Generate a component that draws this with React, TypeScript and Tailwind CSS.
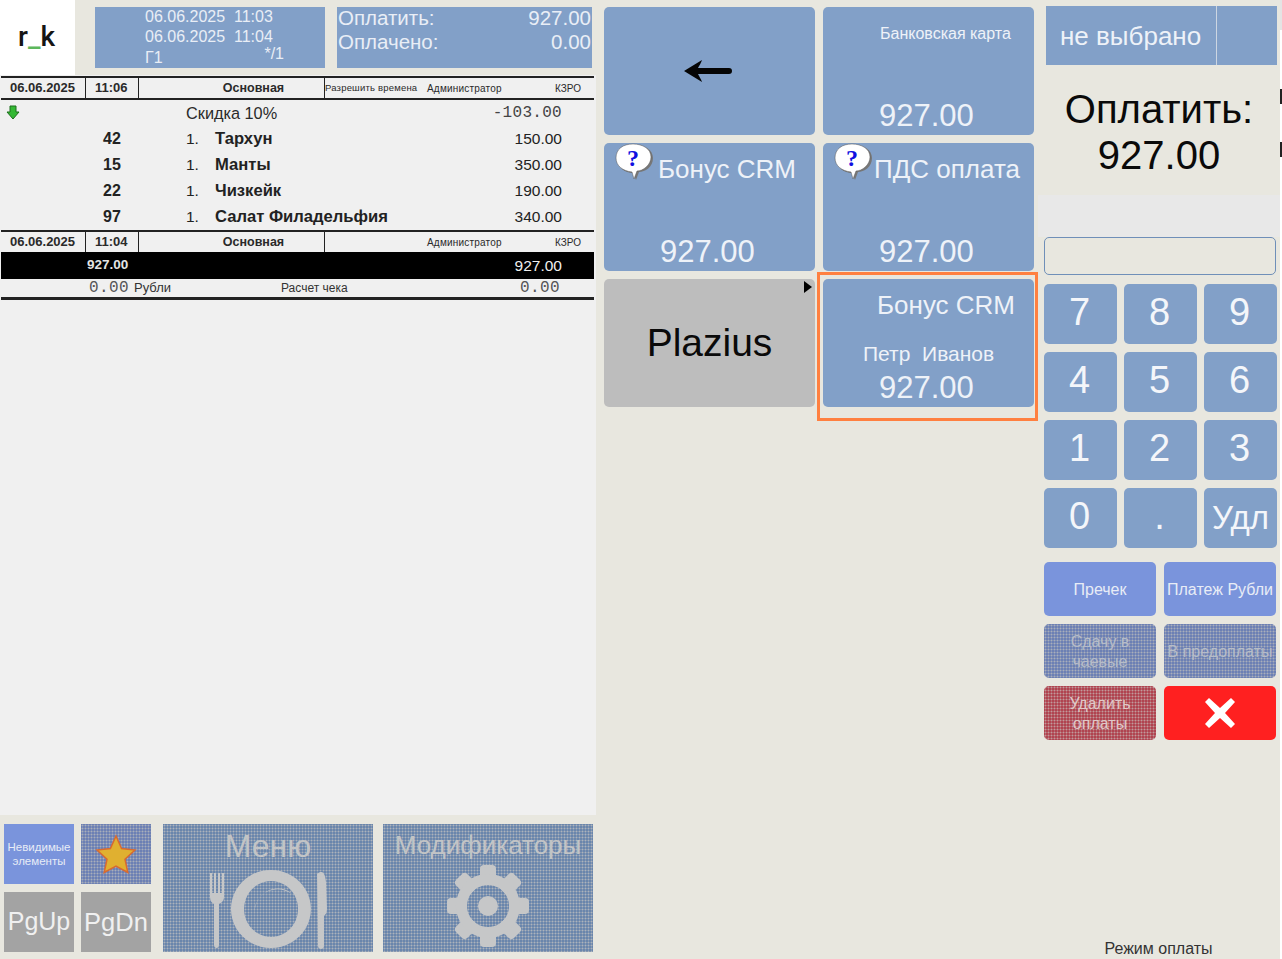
import React from "react";

const FONT = "font-['Liberation_Sans',Arial,sans-serif]";
const MONO = "font-['Liberation_Mono',monospace]";
const DITHER_BLUE = "bg-[#6a86ac] bg-[radial-gradient(circle,#adb3bb_0.85px,transparent_1.1px)] bg-[length:3px_3px]";
const DITHER_VIOLET = "bg-[#6c80b4] bg-[radial-gradient(circle,#a9aeba_0.85px,transparent_1.1px)] bg-[length:3px_3px]";
const DITHER_RED = "bg-[#b04450] bg-[radial-gradient(circle,#c09a9c_0.85px,transparent_1.1px)] bg-[length:3px_3px]";

function Bubble() {
  return (
    <svg width="40" height="38" viewBox="0 0 40 38" className="absolute left-[11px] top-[0px]">
      <path d="M3 16 C3 7 10 2 20 2 C30 2 38 7 38 15 C38 24 30 29 24 29 L21 37 L18 30 C10 30 3 25 3 16Z" fill="#777" />
      <path d="M1 15 C1 6 8 1 18 1 C28 1 36 6 36 14 C36 22 28 28 22 28 L19 36 L17 29 C8 28 1 23 1 15Z" fill="#fff" stroke="#555" strokeWidth="0.5" />
      <text x="18" y="23" textAnchor="middle" fontFamily="'Liberation Serif',serif" fontWeight="700" fontSize="24" fill="#1010e0">?</text>
    </svg>
  );
}

function PayButton({ title, titleClass, sub, amount = "927.00", amountPl, bubble }: { title?: string; titleClass?: string; sub?: string; amount?: string; amountPl: string; bubble?: boolean }) {
  return (
    <div className="relative flex h-[128px] w-[211px] flex-col rounded-[5px] bg-[#82a0c8] text-[#eef2f8]">
      {bubble && <Bubble />}
      <div className={`whitespace-nowrap ${titleClass}`}>{title}</div>
      <div className="flex-1" />
      {sub && <div className="mb-[4px] whitespace-pre pl-[40px] text-[21px] leading-[24px]">{sub}</div>}
      <div className={`mb-[1px] text-[31px] leading-[36px] ${amountPl}`}>{amount}</div>
    </div>
  );
}

function OrderHeader({ time, allow }: { time: string; allow?: boolean }) {
  return (
    <div className="flex h-[20px] items-center text-[#2a2a2a]">
      <div className="flex h-full w-[85px] items-center border-r border-[#222] pl-[9px] text-[13px] font-bold">06.06.2025</div>
      <div className="flex h-full w-[53px] items-center border-r border-[#222] pl-[9px] text-[13px] font-bold">{time}</div>
      <div className="flex h-full w-[186px] items-center justify-center border-r border-[#222] pl-[44px] text-[12.5px] font-bold">Основная</div>
      <div className="w-[102px] whitespace-nowrap text-[9.5px] tracking-[0.2px]">{allow ? "Разрешить времена" : ""}</div>
      <div className="w-[128px] text-[10px] tracking-[0.2px]">Администратор</div>
      <div className="text-[10px]">КЗРО</div>
    </div>
  );
}

function Item({ code, name, price }: { code: string; name: string; price: string }) {
  return (
    <div className="flex h-[26px] items-center text-[15.5px] text-[#222]">
      <div className="w-[185px] pl-[102px] text-[16px] font-bold">{code}</div>
      <div className="w-[29px]">1.</div>
      <div className="w-[290px] text-[16.6px] font-bold">{name}</div>
      <div className="w-[57px] text-right">{price}</div>
    </div>
  );
}

function Key({ children, small }: { children: React.ReactNode; small?: boolean }) {
  return (
    <div className={`flex h-[60px] w-[73px] items-center justify-center rounded-[5px] bg-[#82a0c8] leading-none text-[#f4f6fa] ${small ? "pb-[2px] text-[33px]" : "pb-[4px] pr-[2px] text-[38px]"}`}>
      {children}
    </div>
  );
}

function Action({ children, className }: { children: React.ReactNode; className: string }) {
  return <div className={`flex h-[54px] w-[112px] items-center justify-center whitespace-pre-line rounded-[5px] pt-[2px] text-center text-[16px] leading-[20px] ${className}`}>{children}</div>;
}

function Plate() {
  return (
    <svg width="120" height="84" viewBox="0 0 120 84">
      <g fill="#c6c7c8">
        <path d="M2 5h2v20h2V5h2v20h2V5h2v20h2V5h2v24c0 4-3 6-5 7v41c0 4-5 4-5 0V36C4 35 2 33 2 29Z" />
        <path d="M109 6c5-4 8-2 9 8l1 27c0 4-2 6-3 7v30c0 4-6 4-6 0Z" />
        <path fillRule="evenodd" d="M63 2a40 39 0 1 1-.1 0ZM63 13a27 28 0 1 0 .1 0Z" />
        <path d="M84 26c-10-9-27-7-35 8-2 5-3 9-3 13 0-9 3-15 8-20 8-7 20-8 30-1Z" />
      </g>
    </svg>
  );
}

function Gear() {
  const teeth = [0, 45, 90, 135, 180, 225, 270, 315];
  return (
    <svg width="84" height="84" viewBox="-42 -42 84 84" className="mt-[3px]">
      <g fill="#c6c7c8">
        {teeth.map((a) => (
          <rect key={a} x="-8" y="-41" width="16" height="20" rx="4" transform={`rotate(${a})`} />
        ))}
        <path fillRule="evenodd" d="M0-32a32 32 0 1 1-.1 0ZM0-21a21 21 0 1 0 .1 0Z" />
        <circle r="10" />
      </g>
    </svg>
  );
}

export default function App() {
  return (
    <div className={`flex h-[959px] w-[1282px] overflow-hidden bg-[#e8e7df] ${FONT}`}>
      {/* left column */}
      <div className="flex h-full w-[597px] flex-col">
        <div className="flex h-[75px]">
          <div className="flex w-[75px] items-center justify-center bg-white pb-[1px] pr-[2px] font-['Roboto',sans-serif] text-[28px] font-medium leading-none text-[#151515]">
            r<span className="text-[#5cb85c]">_</span>k
          </div>
          <div className="ml-[20px] mt-[7px] h-[61px] w-[230px] bg-[#82a0c8] pl-[50px] text-[16px] leading-[20px] text-[#e9eef6]">
            <div className="whitespace-pre">06.06.2025  11:03</div>
            <div className="whitespace-pre">06.06.2025  11:04</div>
            <div className="flex w-[139px] justify-between">
              <span className="pt-[1px]">Г1</span>
              <span className="-mt-[3px]">*/1</span>
            </div>
          </div>
          <div className="ml-[12px] mt-[7px] h-[61px] w-[255px] bg-[#82a0c8] pl-[1px] pr-[1px] text-[20.5px] leading-[24px] text-[#e9eef6]">
            <div className="-mt-[1px] flex justify-between"><span>Оплатить:</span><span>927.00</span></div>
            <div className="flex justify-between"><span>Оплачено:</span><span>0.00</span></div>
          </div>
        </div>

        <div className="h-[740px] w-[596px] bg-[#f0f0f0] pl-[1px] pt-[1px]">
          <div className="w-[593px]">
            <div className="border-t-2 border-[#222]" />
            <OrderHeader time="11:06" allow />
            <div className="border-t-2 border-[#222]" />
            <div className="flex h-[26px] items-center text-[16.300px] text-[#2a2a2a]">
              <div className="w-[185px] pl-[5px]">
                <svg width="14" height="15" viewBox="0 0 14 15" className="-mt-[2px]"><path d="M4 1h6v6h3l-6 7-6-7h3Z" fill="#34b834" stroke="#1c6e1c" strokeWidth="1" /></svg>
              </div>
              <div className="w-[250px]">Скидка 10%</div>
              <div className={`w-[126px] text-right text-[16px] tracking-[0.3px] text-[#444] ${MONO}`}>-103.00</div>
            </div>
            <Item code="42" name="Тархун" price="150.00" />
            <Item code="15" name="Манты" price="350.00" />
            <Item code="22" name="Чизкейк" price="190.00" />
            <Item code="97" name="Салат Филадельфия" price="340.00" />
            <div className="border-t-2 border-[#222]" />
            <OrderHeader time="11:04" />
            <div className="flex h-[27px] items-center bg-black text-white">
              <div className="w-[86px]" />
              <div className="w-[475px] text-[13.500px] font-bold text-[#e4e4e4]">927.00</div>
              <div className="-ml-[50px] w-[50px] text-right text-[15.500px] text-[#f0f0f0]">927.00</div>
            </div>
            <div className="flex h-[18px] items-center text-[#333]">
              <div className={`w-[128px] text-right text-[16px] tracking-[0.4px] text-[#555] ${MONO}`}>0.00</div>
              <div className="ml-[5px] w-[147px] text-[13px]">Рубли</div>
              <div className="w-[100px] text-[12px]">Расчет чека</div>
              <div className={`w-[179px] text-right text-[16px] tracking-[0.4px] text-[#555] ${MONO}`}>0.00</div>
            </div>
            <div className="border-t-[3px] border-[#222]" />
          </div>
        </div>

        <div className="flex gap-[10px] pl-[4px] pt-[9px]">
          <div className="grid grid-cols-[70px_70px] grid-rows-[60px_60px] gap-x-[7px] gap-y-[8px]">
            <div className="flex items-center justify-center bg-[#7a94dc] text-center text-[11.500px] leading-[14px] text-[#e8ecf6]">
              <span>Невидимые<br />элементы</span>
            </div>
            <div className={`flex items-center justify-center ${DITHER_VIOLET}`}>
              <svg width="42" height="42" viewBox="0 0 42 42">
                <path d="M21 3l5.600 12.500 13.400 1.500-10 9.200 2.800 13.300L21 33l-11.800 6.500L12 26.200 2 17l13.400-1.500Z" fill="#e0b030" stroke="#d86a30" strokeWidth="1.500" />
              </svg>
            </div>
            <div className="flex items-center justify-center bg-[#a3a3a3] text-[25px] text-[#f0f0f0]">PgUp</div>
            <div className="flex items-center justify-center bg-[#a3a3a3] text-[25.500px] text-[#f0f0f0]">PgDn</div>
          </div>
          <div className={`ml-[2px] flex h-[128px] w-[210px] flex-col items-center overflow-hidden ${DITHER_BLUE}`}>
            <div className="pt-[4px] text-[32px] leading-[36px] text-[#c2c4c6]">Меню</div>
            <div className="pt-[4px]"><Plate /></div>
          </div>
          <div className={`flex h-[128px] w-[210px] flex-col items-center overflow-hidden ${DITHER_BLUE}`}>
            <div className="whitespace-nowrap pt-[5px] text-[26px] leading-[32px] text-[#c2c4c6]">Модификаторы</div>
            <Gear />
          </div>
        </div>
      </div>

      {/* middle column */}
      <div className="w-[441px] pl-[7px] pt-[7px]">
        <div className="grid grid-cols-[211px_211px] grid-rows-[128px_128px_128px] gap-[8px]">
          <div className="flex items-center justify-center rounded-[5px] bg-[#82a0c8] pr-[3px]">
            <svg width="50" height="26" viewBox="0 0 50 26">
              <path d="M1 13 L19 2 C18 5 16 8 15 10 H46 a3 3 0 0 1 0 6 H15 C16 18 18 21 19 24 Z" fill="#050505" />
            </svg>
          </div>
          <PayButton title="Банковская карта" titleClass="pl-[57px] pt-[17px] text-[16px] leading-[20px]" amountPl="pl-[56px]" />
          <PayButton bubble title="Бонус CRM" titleClass="pl-[54px] pt-[10px] text-[26px] leading-[33px]" amountPl="pl-[56px]" />
          <PayButton bubble title="ПДС оплата" titleClass="pl-[51px] pt-[10px] text-[26px] leading-[33px]" amountPl="pl-[56px]" />
          <div className="relative flex items-center justify-center rounded-[5px] bg-[#bdbdbd] text-[39px] text-[#0a0a0a]">
            Plazius
            <div className="absolute right-[3px] top-[2px] border-y-[6px] border-l-[8px] border-y-transparent border-l-black" />
          </div>
          <div className="relative">
            <PayButton title="Бонус CRM" titleClass="pl-[54px] pt-[10px] text-[26px] leading-[33px]" sub="Петр  Иванов" amountPl="pl-[56px]" />
            <div className="absolute -left-[6px] -top-[7px] h-[149px] w-[221px] border-[3px] border-[#ff8040]" />
          </div>
        </div>
      </div>

      {/* right column */}
      <div className="flex w-[242px] flex-col">
        <div className="ml-[8px] mt-[6px] flex h-[59px] w-[231px] bg-[#82a0c8] text-[#eef2f8]">
          <div className="flex w-[171px] items-center border-r border-[#cdd6e2] pl-[14px] text-[26px] leading-none">не выбрано</div>
        </div>
        <div className="h-[130px] pt-[21px] text-center text-[40px] leading-[46px] text-[#0a0a0a]">
          <div>Оплатить:</div>
          <div>927.00</div>
        </div>
        <div className="h-[42px] bg-[#e8e8e8]" />
        <div className="ml-[6px] h-[38px] w-[232px] rounded-[5px] border border-[#6f8fb8] bg-[#e8e7df]" />
        <div className="ml-[6px] mt-[9px] grid grid-cols-[73px_73px_73px] gap-x-[7px] gap-y-[8px]">
          <Key>7</Key><Key>8</Key><Key>9</Key>
          <Key>4</Key><Key>5</Key><Key>6</Key>
          <Key>1</Key><Key>2</Key><Key>3</Key>
          <Key>0</Key><Key>.</Key><Key small>Удл</Key>
        </div>
        <div className="ml-[6px] mt-[14px] grid grid-cols-[112px_112px] gap-x-[8px] gap-y-[8px]">
          <Action className="bg-[#7a94dc] text-[#e8ecf6]">Пречек</Action>
          <Action className="bg-[#7a94dc] text-[#e8ecf6]">Платеж Рубли</Action>
          <Action className={`text-[#b6bcc8] ${DITHER_VIOLET}`}>{"Сдачу в\nчаевые"}</Action>
          <Action className={`text-[#b6bcc8] ${DITHER_VIOLET}`}>В предоплаты</Action>
          <Action className={`text-[#e0c8c8] ${DITHER_RED}`}>{"Удалить\nоплаты"}</Action>
          <Action className="bg-[#ff2020]">
            <svg width="32" height="32" viewBox="0 0 32 32" className="-mt-[2px]"><path d="M5 1 L16 11 L27 1 L31 5 L21 16 L31 27 L27 31 L16 21 L5 31 L1 27 L11 16 L1 5 Z" fill="#fff" /></svg>
          </Action>
        </div>
        <div className="flex-1" />
        <div className="pb-[1px] pr-[1px] text-center text-[16px] leading-[18px] text-[#333]">Режим оплаты</div>
      </div>

      {/* window edge */}
      <div className="flex w-[2px] flex-col bg-white">
        <div className="h-[30px] bg-[#e4e4e4]" />
        <div className="mt-[59px] h-[15px] bg-[#222]" />
        <div className="mt-[38px] h-[15px] bg-[#222]" />
        <div className="flex-1" />
      </div>
    </div>
  );
}
